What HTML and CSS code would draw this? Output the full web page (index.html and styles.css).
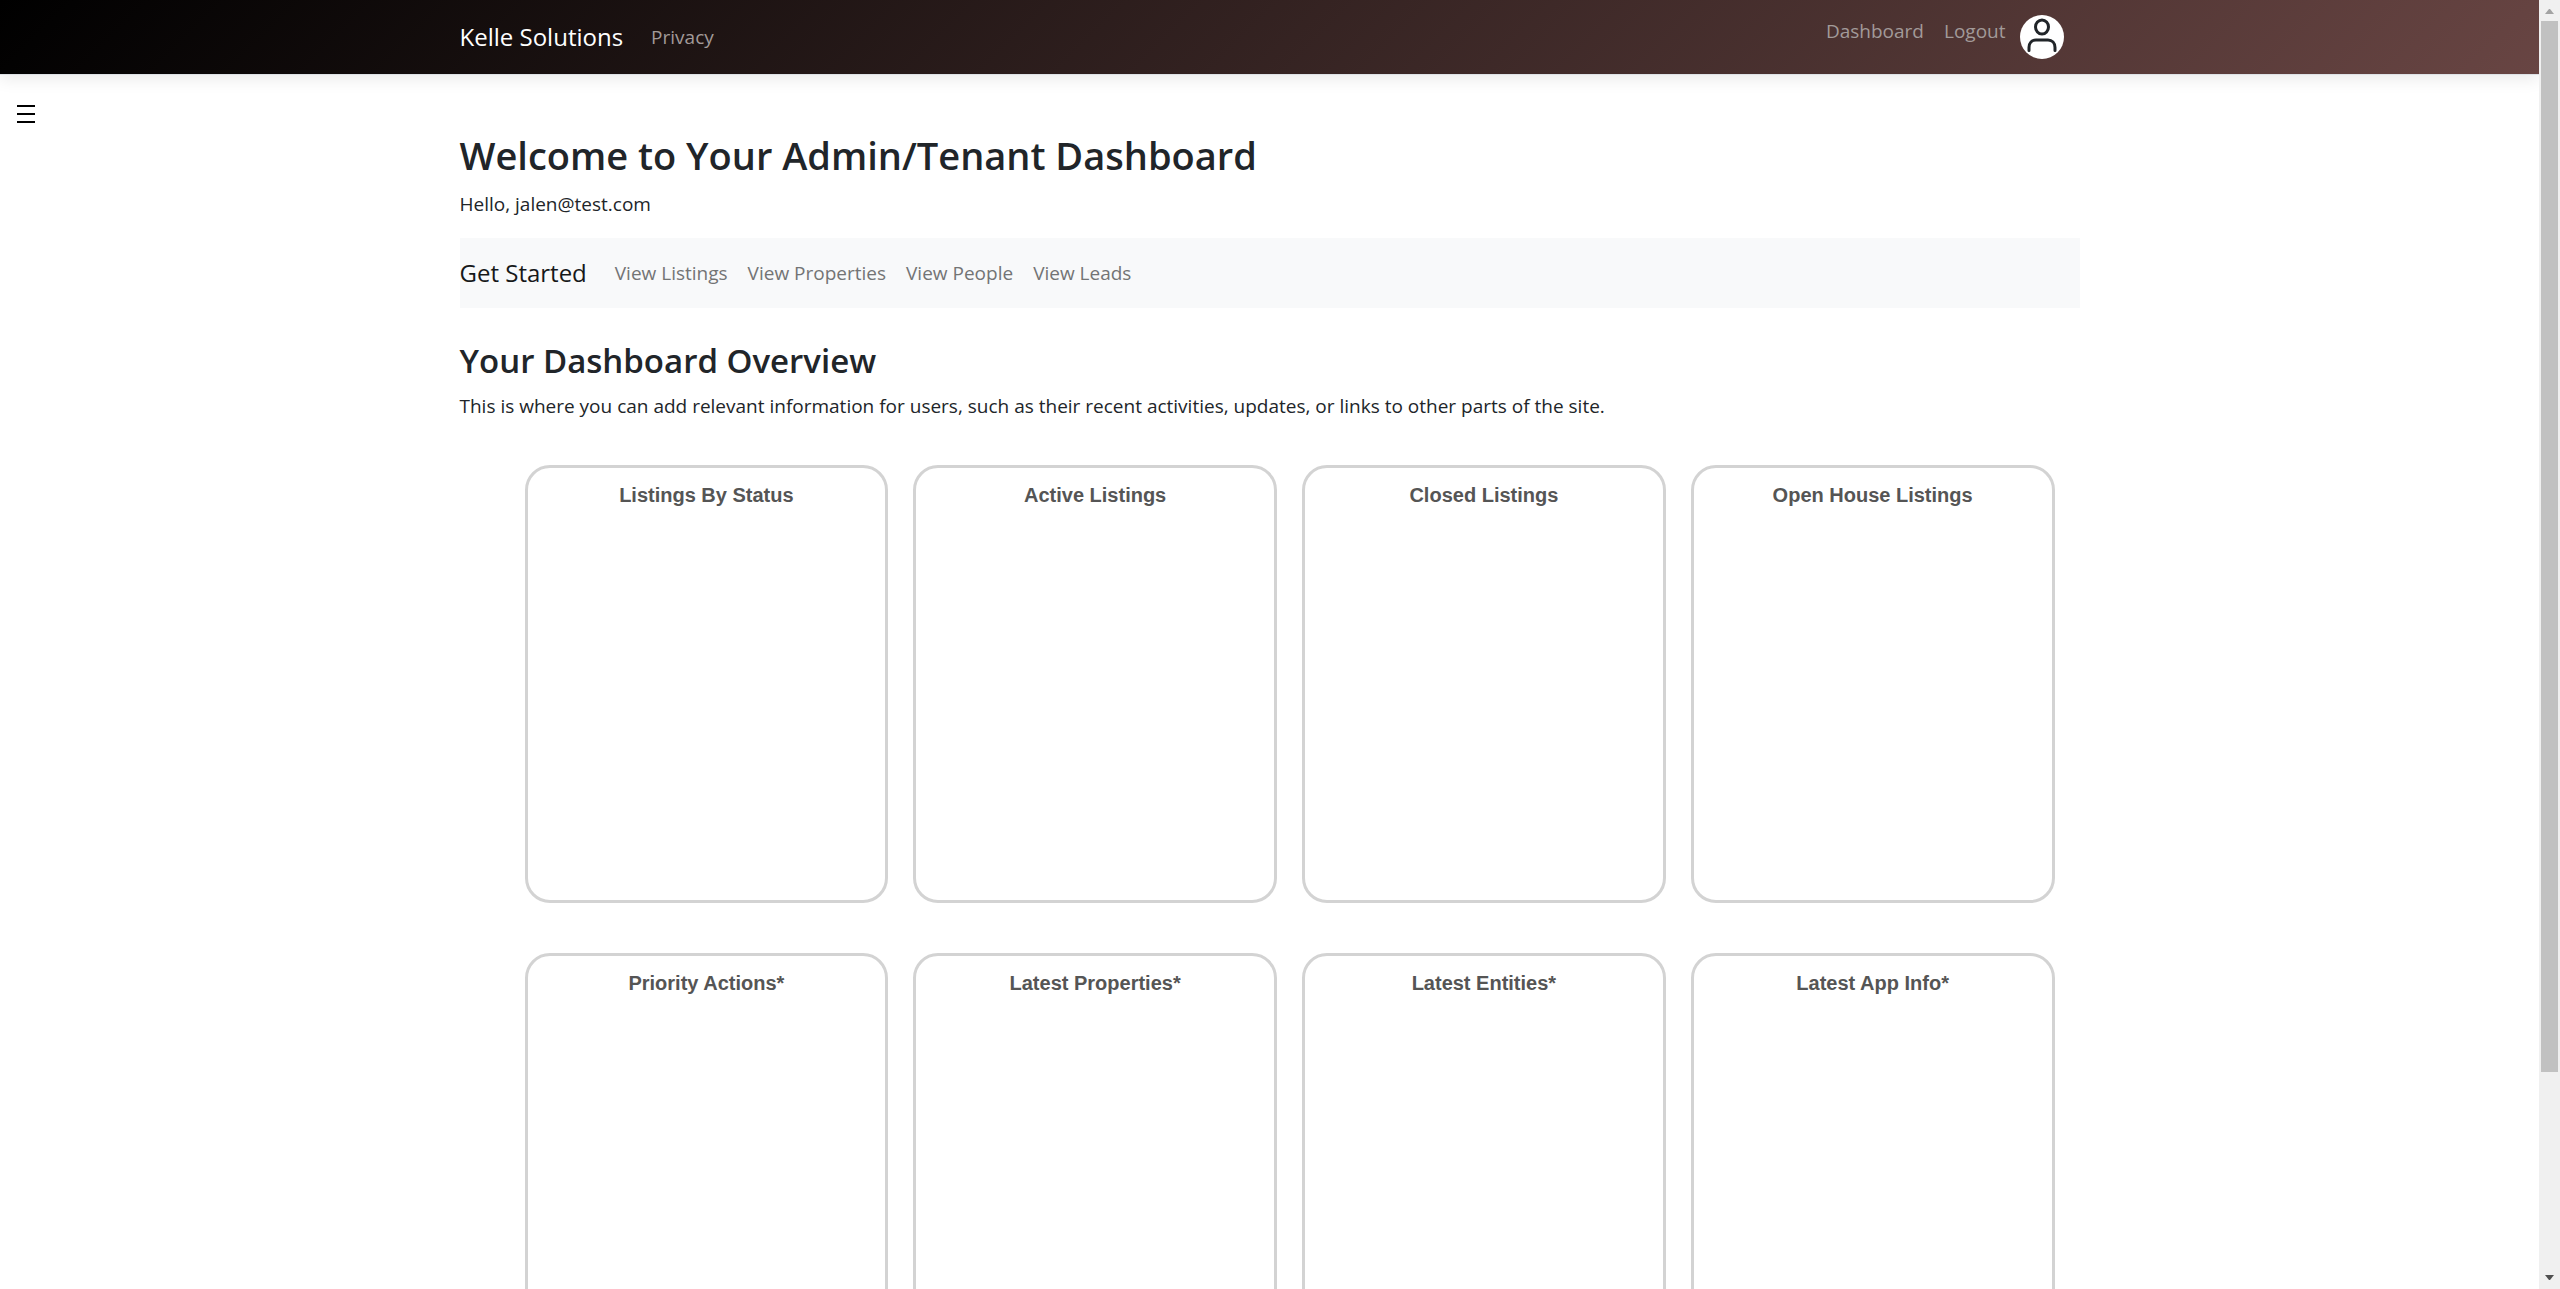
FILE: index.html
```html
<!DOCTYPE html>
<html lang="en">
<head>
<meta charset="utf-8">
<title>Dashboard - Kelle Solutions</title>
<meta name="viewport" content="width=device-width, initial-scale=1">
<link rel="stylesheet" href="styles.css">
</head>
<body>
<div class="viewport">
  <div class="page">
    <header class="topbar">
      <nav class="container topbar-inner" aria-label="Main">
        <a class="brand" href="#">Kelle Solutions</a>
        <a class="nav-link" href="#">Privacy</a>
        <div class="account">
          <a class="nav-link" href="#">Dashboard</a>
          <a class="nav-link" href="#">Logout</a>
          <button class="avatar" type="button" aria-label="Profile">
            <svg viewBox="0 0 44 44" fill="none" stroke="#212529" stroke-width="3" stroke-linecap="round">
              <ellipse cx="22" cy="12" rx="6.5" ry="7"/>
              <path d="M9 35.500v-3c0-4.500 3-7.500 7-7.500h12c4 0 7 3 7 7.500v3"/>
            </svg>
          </button>
        </div>
      </nav>
    </header>
    <div class="body-area">
      <button class="menu-toggle" type="button" aria-label="Open menu">
        <svg viewBox="0 0 18 18" stroke="#000" stroke-width="2"><path d="M0 1h18M0 9h18M0 17h18"/></svg>
      </button>
      <main class="container content">
        <h1 class="title">Welcome to Your Admin/Tenant Dashboard</h1>
        <p class="text">Hello, jalen@test.com</p>
        <nav class="quick-nav" aria-label="Get started">
          <a class="brand" href="#">Get Started</a>
          <a class="nav-link" href="#">View Listings</a>
          <a class="nav-link" href="#">View Properties</a>
          <a class="nav-link" href="#">View People</a>
          <a class="nav-link" href="#">View Leads</a>
        </nav>
        <h2 class="subtitle">Your Dashboard Overview</h2>
        <p class="text">This is where you can add relevant information for users, such as their recent activities, updates, or links to other parts of the site.</p>
        <div class="cards">
          <section class="card"><h3 class="card-title">Listings By Status</h3></section>
          <section class="card"><h3 class="card-title">Active Listings</h3></section>
          <section class="card"><h3 class="card-title">Closed Listings</h3></section>
          <section class="card"><h3 class="card-title">Open House Listings</h3></section>
          <section class="card"><h3 class="card-title">Priority Actions*</h3></section>
          <section class="card"><h3 class="card-title">Latest Properties*</h3></section>
          <section class="card"><h3 class="card-title">Latest Entities*</h3></section>
          <section class="card"><h3 class="card-title">Latest App Info*</h3></section>
        </div>
      </main>
    </div>
  </div>
  <div class="scrollbar" aria-hidden="true">
    <svg class="arrow" viewBox="0 0 21 21"><path d="M6 14h9l-4-5h-1z" fill="#a3a3a3"/></svg>
    <div class="track"><div class="thumb" style="height: 84.3%"></div></div>
    <svg class="arrow" viewBox="0 0 21 21"><path d="M6 7h9l-4 5h-1z" fill="#505050"/></svg>
  </div>
</div>
</body>
</html>
```
FILE: styles.css
```css
* { box-sizing: border-box; }

body {
  margin: 0;
  background: #fff;
  color: #212529;
  font-family: "Open Sans", "Noto Sans", sans-serif;
  font-size: 19px;
  line-height: 30px;
}

a { color: inherit; text-decoration: none; }
button { border: 0; padding: 0; background: none; cursor: pointer; }

.viewport {
  display: grid;
  grid-template-columns: minmax(0, 1fr) 21px;
  height: 100vh;
  overflow: hidden;
}

.page { overflow: hidden; }

.container {
  width: 100%;
  max-width: 1650px;
  margin: 0 auto;
  padding: 0 15px;
}

/* Top bar */
.topbar {
  background: linear-gradient(135deg, #000, #684543);
  border-bottom: 1px solid #dee2e6;
  box-shadow: 0 5px 15px rgba(0, 0, 0, 0.08);
  color: #fff;
}

.topbar-inner {
  display: flex;
  align-items: center;
  height: 74px;
}

.brand {
  margin-right: 18px;
  font-size: 24px;
}

.nav-link { padding: 10px; }
.topbar .nav-link { color: #a29a99; }

.account {
  display: flex;
  align-items: flex-start;
  margin-left: auto;
  padding-right: 16px;
}

.account .nav-link { padding-top: 1px; }

.avatar {
  width: 44px;
  height: 44px;
  margin-left: 4px;
  border-radius: 50%;
  background: #fff;
}

.avatar svg { display: block; }

/* Body */
.body-area { position: relative; }

.menu-toggle {
  position: absolute;
  top: 30px;
  left: 17px;
  width: 18px;
  height: 18px;
}

.menu-toggle svg { display: block; }

.content { padding-top: 56px; }

.title, .subtitle { margin: 0 0 10px; font-weight: 600; }
.title { font-size: 38px; line-height: 48px; }
.subtitle { margin-top: 32px; font-size: 33px; line-height: 41px; }
.text { margin: 0 0 19px; }

.quick-nav {
  display: flex;
  align-items: center;
  height: 70px;
  background: #f8f9fa;
}

.quick-nav .brand { color: #161819; }
.quick-nav .nav-link { color: #737475; }

/* Cards */
.cards {
  display: grid;
  grid-template-columns: repeat(4, minmax(0, 1fr));
  gap: 50px 25px;
  padding: 25px 25px 50px 65px;
}

.card {
  min-height: 438px;
  padding: 12px;
  border: 3px solid #d3d3d3;
  border-radius: 25px;
}

.card-title {
  margin: 0;
  color: #555;
  font: bold 20px/30px "Liberation Sans", Arial, sans-serif;
  text-align: center;
}

/* Scroll bar */
.scrollbar {
  display: flex;
  flex-direction: column;
  background: #f0f0f0;
}

.arrow { width: 21px; height: 21px; }
.track { flex: 1; padding: 0 2px; }
.thumb { background: #c1c1c1; }
```
